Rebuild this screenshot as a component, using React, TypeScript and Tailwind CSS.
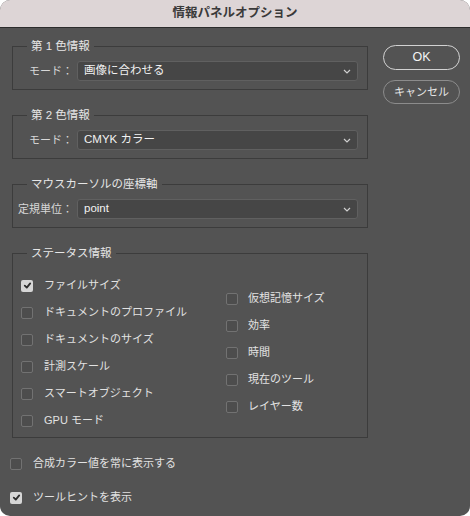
const leftItems = [
  { label: 'ファイルサイズ', checked: true },
  { label: 'ドキュメントのプロファイル', checked: false },
  { label: 'ドキュメントのサイズ', checked: false },
  { label: '計測スケール', checked: false },
  { label: 'スマートオブジェクト', checked: false },
  { label: 'GPU モード', checked: false },
]

const rightItems = [
  { label: '仮想記憶サイズ', checked: false },
  { label: '効率', checked: false },
  { label: '時間', checked: false },
  { label: '現在のツール', checked: false },
  { label: 'レイヤー数', checked: false },
]

function Checkbox({ checked }: { checked: boolean }) {
  if (checked) {
    return (
      <span className="flex h-3 w-3 flex-shrink-0 items-center justify-center rounded-[2px] bg-[#d6d6d6]">
        <svg width="9" height="9" viewBox="0 0 10 10" fill="none" stroke="#2e2e2e" strokeWidth="2" strokeLinecap="round" strokeLinejoin="round">
          <path d="M2 5.2 L4.2 7.4 L8 2.6" />
        </svg>
      </span>
    )
  }
  return <span className="h-3 w-3 flex-shrink-0 rounded-[2px] border border-[#727272] bg-[#4d4d4d]" />
}

function CheckRow({ label, checked, gap = 'gap-[11px]' }: { label: string; checked: boolean; gap?: string }) {
  return (
    <div className={`flex h-[27px] items-center ${gap} text-[11px] text-[#e2e2e2]`}>
      <Checkbox checked={checked} />
      <span className="whitespace-nowrap">{label}</span>
    </div>
  )
}

function Select({ value }: { value: string }) {
  return (
    <div className="flex h-5 flex-1 items-center justify-between rounded-[3px] border border-[#606060] bg-[#464646] pl-[6px] pr-[6px] text-[11.5px] text-[#f2f2f2]">
      <span>{value}</span>
      <svg width="8" height="5" viewBox="0 0 8 5" fill="none" stroke="#cfcfcf" strokeWidth="1.2">
        <path d="M1 1 L4 4 L7 1" />
      </svg>
    </div>
  )
}

function Group({ title, className = '', children }: { title: string; className?: string; children: React.ReactNode }) {
  return (
    <fieldset className={`border border-[#3c3c3c] ${className}`}>
      <legend className="ml-[14px] px-[4px] text-[11.5px] leading-[14px] text-[#e6e6e6]">{title}</legend>
      {children}
    </fieldset>
  )
}

function SelectRow({ label, value }: { label: string; value: string }) {
  return (
    <div className="flex items-center gap-1 pr-[9px] pt-2 pb-[8px]">
      <span className="w-[60px] text-right text-[11px] text-[#d8d8d8]">{label}</span>
      <Select value={value} />
    </div>
  )
}

export default function App() {
  return (
    <div
      className="h-[516px] w-[470px] bg-white"
      style={{ fontFamily: '"Liberation Sans", "Noto Sans CJK JP", sans-serif' }}
    >
      <div className="flex h-full w-full flex-col overflow-hidden rounded-[10px] bg-[#535353]">
        <div className="flex h-[28px] flex-shrink-0 items-center justify-center border-b border-[#2c2c2c] bg-[#ddd5d6] text-[12.5px] font-bold text-[#3a3a3a]">
          情報パネルオプション
        </div>

        <div className="flex flex-1">
          <div className="ml-3 mt-[11px] flex w-[356px] flex-col">
            <Group title="第 1 色情報">
              <SelectRow label="モード：" value="画像に合わせる" />
            </Group>

            <Group title="第 2 色情報" className="mt-[18px]">
              <SelectRow label="モード：" value="CMYK カラー" />
            </Group>

            <Group title="マウスカーソルの座標軸" className="mt-[18px]">
              <SelectRow label="定規単位：" value="point" />
            </Group>

            <Group title="ステータス情報" className="mt-[18px]">
              <div className="flex pb-[3px] pl-2 pt-[12px]">
                <div className="flex w-[205px] flex-col">
                  {leftItems.map((item) => (
                    <CheckRow key={item.label} label={item.label} checked={item.checked} />
                  ))}
                </div>
                <div className="flex flex-col pt-[13px]">
                  {rightItems.map((item) => (
                    <CheckRow key={item.label} label={item.label} checked={item.checked} gap="gap-[10px]" />
                  ))}
                </div>
              </div>
            </Group>

            <div className="-ml-[2px] mt-[12px] flex flex-col gap-[7px]">
              <CheckRow label="合成カラー値を常に表示する" checked={false} />
              <CheckRow label="ツールヒントを表示" checked={true} />
            </div>
          </div>

          <div className="ml-[15px] mt-[17px] flex w-[77px] flex-col gap-[10px]">
            <button className="h-[25px] rounded-full border border-[#d2d2d2] text-[12.5px] text-[#f4f4f4]">
              OK
            </button>
            <button className="h-[24px] rounded-full border border-[#8c8c8c] text-[11px] text-[#e6e6e6]">
              キャンセル
            </button>
          </div>
        </div>
      </div>
    </div>
  )
}
